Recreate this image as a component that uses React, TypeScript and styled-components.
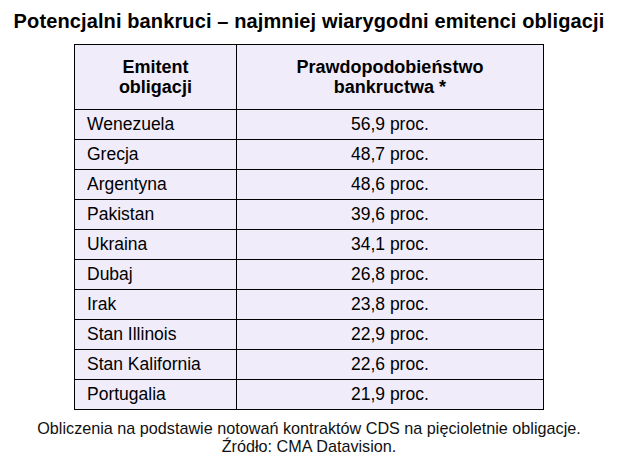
import React from "react";
import styled, { createGlobalStyle } from "styled-components";

const Global = createGlobalStyle`
  html, body { margin: 0; padding: 0; background: #ffffff; }
  body { font-family: "Liberation Sans", Arial, sans-serif; color: #000; }
`;

const Page = styled.div`
  width: 618px;
  height: 462px;
  display: flex;
  flex-direction: column;
  align-items: center;
  overflow: hidden;
`;

const Title = styled.h1`
  margin: 10px 0 0;
  font-size: 20px;
  line-height: 22px;
  letter-spacing: 0.12px;
  font-weight: bold;
  white-space: nowrap;
`;

const Table = styled.table`
  margin-top: 12px;
  width: 470px;
  border-collapse: collapse;
  background: #f0ecfa;
  font-size: 17.5px;
`;

const HeadCell = styled.th`
  border: 1px solid #000;
  height: 64px;
  padding: 0;
  font-size: 18px;
  line-height: 20px;
  font-weight: bold;
  text-align: center;
  vertical-align: middle;
`;

const Cell = styled.td<{ $align: "left" | "center" }>`
  border: 1px solid #000;
  height: 30px;
  padding: 0 0 2px ${(p) => (p.$align === "left" ? "12px" : "0")};
  box-sizing: border-box;
  line-height: 20px;
  text-align: ${(p) => p.$align};
  vertical-align: middle;
  white-space: nowrap;
`;

const Footer = styled.p`
  margin: 9px 0 0;
  font-size: 16.2px;
  line-height: 18px;
  text-align: center;
  color: #111;
`;

const rows: [string, string][] = [
  ["Wenezuela", "56,9 proc."],
  ["Grecja", "48,7 proc."],
  ["Argentyna", "48,6 proc."],
  ["Pakistan", "39,6 proc."],
  ["Ukraina", "34,1 proc."],
  ["Dubaj", "26,8 proc."],
  ["Irak", "23,8 proc."],
  ["Stan Illinois", "22,9 proc."],
  ["Stan Kalifornia", "22,6 proc."],
  ["Portugalia", "21,9 proc."],
];

export default function App() {
  return (
    <>
      <Global />
      <Page>
        <Title>Potencjalni bankruci – najmniej wiarygodni emitenci obligacji</Title>
        <Table>
          <colgroup>
            <col style={{ width: "162px" }} />
            <col style={{ width: "308px" }} />
          </colgroup>
          <thead>
            <tr>
              <HeadCell>
                Emitent
                <br />
                obligacji
              </HeadCell>
              <HeadCell>
                Prawdopodobieństwo
                <br />
                bankructwa *
              </HeadCell>
            </tr>
          </thead>
          <tbody>
            {rows.map(([name, value]) => (
              <tr key={name}>
                <Cell $align="left">{name}</Cell>
                <Cell $align="center">{value}</Cell>
              </tr>
            ))}
          </tbody>
        </Table>
        <Footer>
          Obliczenia na podstawie notowań kontraktów CDS na pięcioletnie obligacje.
          <br />
          Źródło: CMA Datavision.
        </Footer>
      </Page>
    </>
  );
}
